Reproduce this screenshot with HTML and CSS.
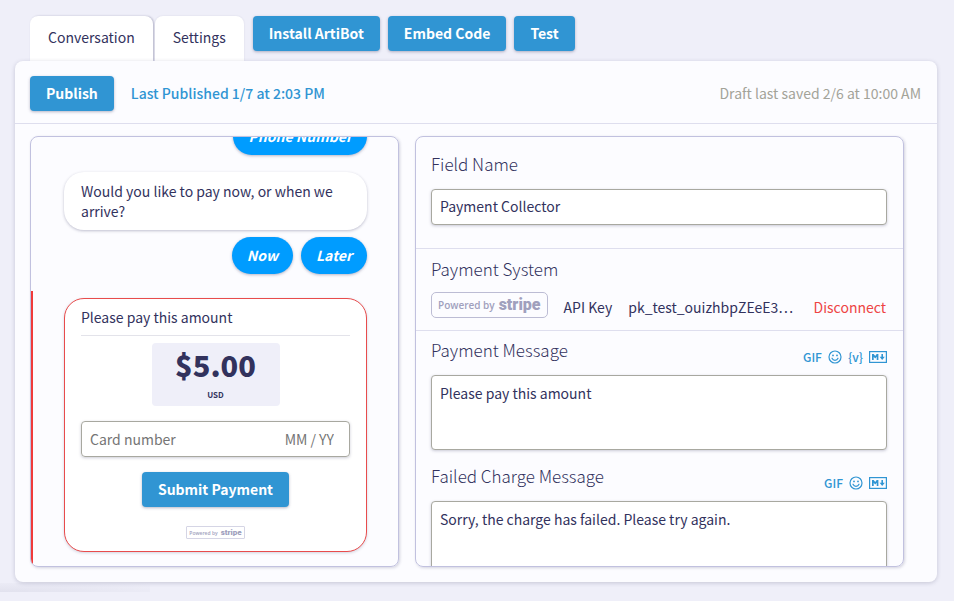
FILE: index.html
```html
<!DOCTYPE html>
<html lang="en">
<head>
<meta charset="utf-8">
<meta name="viewport" content="width=device-width, initial-scale=1">
<title>ArtiBot</title>
<link rel="stylesheet" href="styles.css">
</head>
<body>
<svg class="sprite" aria-hidden="true">
  <symbol id="smile" viewBox="0 0 14 14">
    <circle cx="7" cy="7" r="6" fill="none" stroke="currentColor" stroke-width="1.2"/>
    <circle cx="5" cy="5.4" r="0.9" fill="currentColor"/>
    <circle cx="9" cy="5.4" r="0.9" fill="currentColor"/>
    <path d="M4 8.2c.6 1.4 1.7 2.1 3 2.1s2.4-.7 3-2.1" fill="none" stroke="currentColor" stroke-width="1.2" stroke-linecap="round"/>
  </symbol>
  <symbol id="markdown" viewBox="0 0 18 12">
    <rect x="0.6" y="0.6" width="16.8" height="10.8" fill="none" stroke="currentColor" stroke-width="1.2"/>
    <path d="M3 9V3h1.7l1.5 2 1.5-2h1.7v6H7.7V5.7L6.2 7.6 4.7 5.7V9z" fill="currentColor"/>
    <path d="M12.4 3h1.6v2.700h1.800L13.200 9l-2.600-3.300h1.800z" fill="currentColor"/>
  </symbol>
</svg>
<div class="app">
  <header class="topbar">
    <nav class="tabs">
      <a class="tab tab-active" href="#conversation">Conversation</a>
      <a class="tab" href="#settings">Settings</a>
    </nav>
    <div class="actions">
      <button class="btn" type="button">Install ArtiBot</button>
      <button class="btn" type="button">Embed Code</button>
      <button class="btn" type="button">Test</button>
    </div>
  </header>
  <main class="panel">
    <div class="status">
      <button class="btn" type="button">Publish</button>
      <span class="published">Last Published 1/7 at 2:03 PM</span>
      <span class="draft">Draft last saved 2/6 at 10:00 AM</span>
    </div>
    <div class="columns">
      <section class="pane chat">
        <div class="replies"><button class="pill" type="button">Phone Number</button></div>
        <p class="bubble">Would you like to pay now, or when we arrive?</p>
        <div class="replies">
          <button class="pill" type="button">Now</button>
          <button class="pill" type="button">Later</button>
        </div>
        <div class="selected">
          <form class="card">
            <p class="card-title">Please pay this amount</p>
            <div class="amount"><strong class="price">$5.00</strong><span class="currency">USD</span></div>
            <div class="card-field">
              <input class="card-number" type="text" placeholder="Card number" aria-label="Card number">
              <input class="card-expiry" type="text" placeholder="MM / YY" aria-label="Expiry date">
            </div>
            <button class="btn" type="button">Submit Payment</button>
            <div class="stripe stripe-small"><span class="powered">Powered by</span><span class="brand">stripe</span></div>
          </form>
        </div>
      </section>
      <section class="pane editor">
        <div class="group group-name">
          <label class="label" for="field-name">Field Name</label>
          <input class="input" id="field-name" type="text" value="Payment Collector">
        </div>
        <div class="group group-system">
          <h2 class="label">Payment System</h2>
          <div class="system">
            <div class="stripe"><span class="powered">Powered by</span><span class="brand">stripe</span></div>
            <span class="key-label">API Key</span>
            <span class="key">pk_test_ouizhbpZEeE3…</span>
            <a class="disconnect" href="#disconnect">Disconnect</a>
          </div>
        </div>
        <div class="group group-messages">
          <div class="message-head">
            <label class="label" for="payment-message">Payment Message</label>
            <div class="tools">
              <button class="tool" type="button">GIF</button>
              <button class="tool" type="button" aria-label="Emoji"><svg class="smile"><use href="#smile"/></svg></button>
              <button class="tool" type="button">{v}</button>
              <button class="tool" type="button" aria-label="Markdown"><svg class="markdown"><use href="#markdown"/></svg></button>
            </div>
          </div>
          <textarea class="input area" id="payment-message">Please pay this amount</textarea>
          <div class="message-head">
            <label class="label" for="failed-message">Failed Charge Message</label>
            <div class="tools">
              <button class="tool" type="button">GIF</button>
              <button class="tool" type="button" aria-label="Emoji"><svg class="smile"><use href="#smile"/></svg></button>
              <button class="tool" type="button" aria-label="Markdown"><svg class="markdown"><use href="#markdown"/></svg></button>
            </div>
          </div>
          <textarea class="input area" id="failed-message">Sorry, the charge has failed. Please try again.</textarea>
        </div>
      </section>
    </div>
  </main>
  <div class="edge-shadow"></div>
</div>
</body>
</html>
```
FILE: styles.css
```css
* {
  box-sizing: border-box;
}

body {
  margin: 0;
  background: #efeff9;
  color: #32325d;
  font-family: "Noto Sans CJK SC", "Liberation Sans", sans-serif;
  font-size: 14px;
  line-height: 20px;
}

button,
input,
textarea {
  font: inherit;
  color: inherit;
}

p,
h2 {
  margin: 0;
}

a {
  text-decoration: none;
  color: inherit;
}

.sprite {
  display: none;
}

.app {
  position: relative;
  display: flex;
  flex-direction: column;
  height: 100vh;
  padding: 16px 17px 19px 15px;
}

.topbar {
  display: flex;
  gap: 9px;
  padding-left: 15px;
}

.tabs {
  display: flex;
  gap: 2px;
}

.tab {
  height: 45px;
  padding: 11px 18px;
  border-radius: 8px 8px 0 0;
  background: #fff;
  box-shadow: 0 0 2px rgba(50, 50, 93, 0.12);
}

.tab-active {
  box-shadow: 1px 0 2px rgba(50, 50, 93, 0.3);
}

.actions {
  display: flex;
  gap: 8px;
}

.btn {
  height: 35px;
  padding: 0 16px 2px;
  border: 0;
  border-radius: 4px;
  background: #3095d3;
  color: #fff;
  font-weight: 700;
  box-shadow: 0 1px 3px rgba(50, 50, 93, 0.35);
}

.panel {
  display: flex;
  flex: 1;
  flex-direction: column;
  min-height: 0;
  border-radius: 8px;
  background: #fcfcff;
  box-shadow: 0 1px 4px rgba(50, 50, 93, 0.22);
}

.status {
  display: flex;
  align-items: center;
  gap: 17px;
  height: 63px;
  padding: 3px 16px 0 15px;
  border-bottom: 1px solid #dedeee;
}

.published,
.draft {
  padding-bottom: 2px;
}

.published {
  color: #3095d3;
  font-weight: 500;
}

.draft {
  margin-left: auto;
  color: #a3a399;
}

.columns {
  display: grid;
  flex: 1;
  grid-template-columns: 369fr 489fr;
  gap: 16px;
  min-height: 0;
  padding: 12px 33px 15px 15px;
}

.pane {
  display: flex;
  flex-direction: column;
  min-width: 0;
  min-height: 0;
  border: 1px solid #c1c1df;
  border-radius: 8px;
  overflow: hidden;
  box-shadow: 1px 1px 3px rgba(50, 50, 93, 0.2);
}

.chat {
  justify-content: flex-end;
}

.replies {
  display: flex;
  justify-content: flex-end;
  gap: 8px;
  padding-right: 31px;
}

.pill {
  height: 37px;
  padding: 0 15px 1px;
  border: 0;
  border-radius: 19px;
  background: #009cff;
  color: #fff;
  font-weight: 700;
  font-style: italic;
  box-shadow: 0 1px 3px rgba(50, 50, 93, 0.35);
}

.bubble {
  margin: 17px 31px 7px 33px;
  padding: 9px 17px;
  border-radius: 20px;
  background: #fff;
  box-shadow: 0 1px 3px rgba(50, 50, 93, 0.3);
}

.selected {
  margin-top: 17px;
  padding: 7px 31px 14px;
  border-left: 2px solid #f03a3a;
}

.card {
  display: flex;
  flex-direction: column;
  align-items: center;
  padding: 8px 16px 12px;
  border: 1px solid #e84c4c;
  border-radius: 20px;
  background: #fff;
  box-shadow: 0 1px 3px rgba(50, 50, 93, 0.2);
}

.card-title {
  align-self: stretch;
  padding-bottom: 8px;
  border-bottom: 1px solid #e3e3ea;
}

.amount {
  display: flex;
  flex-direction: column;
  align-items: center;
  width: 128px;
  height: 63px;
  margin: 7px 0 15px;
  border-radius: 4px;
  background: #efeff9;
  font-weight: 700;
}

.price {
  font-size: 29px;
  line-height: 42px;
}

.currency {
  font-size: 8px;
  line-height: 20px;
}

.card-field {
  display: flex;
  align-self: stretch;
  height: 36px;
  margin-bottom: 15px;
  padding: 0 15px 1px 8px;
  border: 1px solid #a8a8a0;
  border-radius: 4px;
  box-shadow: 0 1px 3px rgba(50, 50, 93, 0.25);
}

.card-field input {
  min-width: 0;
  padding: 0;
  border: 0;
  background: none;
  outline: 0;
}

.card-field input::placeholder {
  color: #757575;
  opacity: 1;
}

.card-number {
  flex: 1;
}

.card-expiry {
  width: 64px;
  text-align: right;
}

.stripe {
  display: flex;
  align-items: center;
  gap: 4px;
  height: 26px;
  padding: 0 6px;
  border: 1px solid #bcbcd4;
  border-radius: 5px;
  color: #a0a0bd;
  white-space: nowrap;
}

.powered {
  font-family: "Open Sans", sans-serif;
  font-size: 10px;
  font-weight: 600;
}

.brand {
  font-family: Roboto, sans-serif;
  font-size: 16px;
  font-weight: 900;
}

.stripe-small {
  gap: 3px;
  height: 13px;
  margin-top: 19px;
  padding: 0 2px;
  border-color: #d5d5e5;
  border-radius: 1px;
}

.stripe-small .powered {
  font-size: 5px;
}

.stripe-small .brand {
  font-size: 8px;
}

.group {
  flex: none;
  padding: 0 16px 0 15px;
}

.group-name {
  height: 112px;
  padding-top: 16px;
  border-bottom: 1px solid #dedeee;
}

.group-system {
  height: 82px;
  padding-top: 9px;
  border-bottom: 1px solid #dedeee;
}

.group-messages {
  padding-top: 8px;
}

.label {
  display: block;
  font-size: 17px;
  font-weight: 300;
  line-height: 22px;
}

.input {
  display: block;
  width: 100%;
  height: 36px;
  padding: 0 8px 2px;
  border: 1px solid #a8a8a0;
  border-radius: 4px;
  background: #fff;
  box-shadow: 0 1px 3px rgba(50, 50, 93, 0.25);
  outline: 0;
}

.group-name .input {
  margin-top: 14px;
}

.area {
  height: 75px;
  margin-bottom: 15px;
  padding-top: 7px;
  resize: none;
}

.system {
  display: flex;
  align-items: center;
  gap: 16px;
  margin-top: 12px;
  padding-right: 1px;
}

.key-label,
.key,
.disconnect {
  padding-top: 4px;
  white-space: nowrap;
}

.disconnect {
  margin-left: auto;
  color: #ee4444;
}

.message-head {
  display: flex;
  align-items: flex-start;
  justify-content: space-between;
  height: 36px;
}

.tools {
  display: flex;
  align-items: center;
  gap: 6px;
  padding-top: 10px;
}

.tool {
  display: flex;
  padding: 0;
  border: 0;
  background: none;
  color: #3095d3;
  font-size: 12px;
  font-weight: 500;
  line-height: 16px;
}

.smile {
  width: 14px;
  height: 14px;
}

.markdown {
  width: 18px;
  height: 12px;
}

.edge-shadow {
  position: absolute;
  bottom: 9px;
  left: 0;
  width: 150px;
  height: 9px;
  background: radial-gradient(ellipse at bottom left, rgba(50, 50, 93, 0.07), transparent);
}
```
